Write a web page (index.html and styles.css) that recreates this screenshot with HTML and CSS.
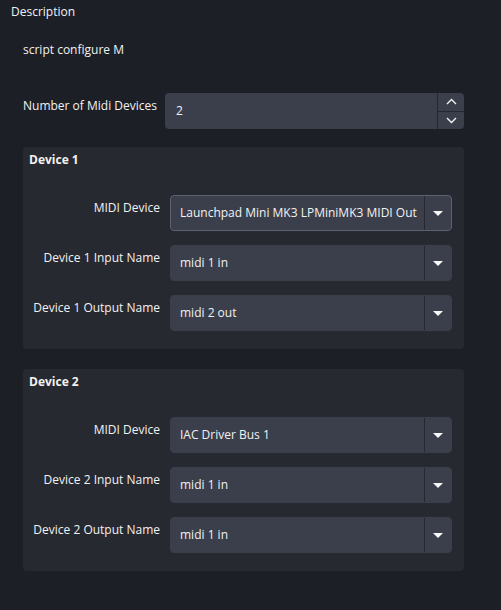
FILE: index.html
```html
<!DOCTYPE html>
<html>
<head>
<meta charset="utf-8">
<link rel="stylesheet" href="styles.css">
</head>
<body>
<div class="page">
  <div class="title">Description</div>
  <div class="content">
    <div class="desc">script configure M</div>
    <div class="toprow">
      <div class="label left">Number of Midi Devices</div>
      <div class="spin">
        <span class="value">2</span>
        <div class="spinbtns">
          <div class="sbtn"><svg width="11" height="7" viewBox="0 0 11 7"><path d="M1 6 L5.5 1.5 L10 6" fill="none" stroke="#f2f2f2" stroke-width="1.4"/></svg></div>
          <div class="sbtn"><svg width="11" height="7" viewBox="0 0 11 7"><path d="M1 1 L5.5 5.5 L10 1" fill="none" stroke="#f2f2f2" stroke-width="1.4"/></svg></div>
        </div>
      </div>
    </div>

    <div class="group g1">
      <div class="gtitle">Device 1</div>
      <div class="grid">
        <div class="label">MIDI Device</div>
        <div class="combo focus"><span class="value">Launchpad Mini MK3 LPMiniMK3 MIDI Out</span><span class="arrow"><i class="tri"></i></span></div>
        <div class="label">Device 1 Input Name</div>
        <div class="combo"><span class="value">midi 1 in</span><span class="arrow"><i class="tri"></i></span></div>
        <div class="label">Device 1 Output Name</div>
        <div class="combo"><span class="value">midi 2 out</span><span class="arrow"><i class="tri"></i></span></div>
      </div>
    </div>

    <div class="group g2">
      <div class="gtitle">Device 2</div>
      <div class="grid">
        <div class="label">MIDI Device</div>
        <div class="combo"><span class="value">IAC Driver Bus 1</span><span class="arrow"><i class="tri"></i></span></div>
        <div class="label">Device 2 Input Name</div>
        <div class="combo"><span class="value">midi 1 in</span><span class="arrow"><i class="tri"></i></span></div>
        <div class="label">Device 2 Output Name</div>
        <div class="combo"><span class="value">midi 1 in</span><span class="arrow"><i class="tri"></i></span></div>
      </div>
    </div>
  </div>
</div>
</body>
</html>
```

FILE: styles.css
```css
html, body {
  margin: 0;
  padding: 0;
  background: #1d1f26;
}
body {
  font-family: "Open Sans", "Noto Sans", sans-serif;
  font-size: 12px;
  line-height: 16px;
  color: #f2f2f2;
  width: 501px;
  height: 610px;
  overflow: hidden;
}
.page {
  padding: 4px 37px 0 11px;
}
.content {
  padding-left: 12px;
}
.desc {
  margin-top: 22px;
}
.toprow {
  margin-top: 35px;
  display: grid;
  grid-template-columns: 142px 1fr;
}
.label {
  padding-top: 5px;
  text-align: right;
}
.label.left {
  text-align: left;
}
.spin {
  height: 36px;
  background: #3b3e4b;
  border-radius: 4px;
  display: flex;
  align-items: center;
}
.spin .value {
  flex: 1;
  padding-left: 11px;
}
.spinbtns {
  width: 26px;
  height: 36px;
  border-left: 1px solid #262830;
  display: flex;
  flex-direction: column;
}
.sbtn {
  flex: 1;
  display: flex;
  align-items: center;
  justify-content: center;
}
.sbtn + .sbtn {
  border-top: 1px solid #262830;
}
.group {
  background: #272930;
  border-radius: 4px;
  padding: 5px 12px 18px 6px;
}
.g1 {
  margin-top: 18px;
}
.g2 {
  margin-top: 20px;
}
.gtitle {
  font-weight: bold;
}
.grid {
  margin-top: 27px;
  display: grid;
  grid-template-columns: 1fr 282px;
  column-gap: 10px;
  row-gap: 14px;
}
.combo {
  height: 36px;
  box-sizing: border-box;
  background: #3b3e4b;
  border-radius: 4px;
  border: 1px solid #3b3e4b;
  display: flex;
  align-items: center;
}
.combo.focus {
  border-color: #5d6170;
}
.combo .value {
  flex: 1;
  padding-left: 9px;
  white-space: nowrap;
  overflow: hidden;
}
.arrow {
  width: 26px;
  height: 34px;
  border-left: 1px solid #262830;
  display: flex;
  align-items: center;
  justify-content: center;
}
.tri {
  width: 0;
  height: 0;
  border-left: 5px solid transparent;
  border-right: 5px solid transparent;
  border-top: 5px solid #f8f8f8;
}
```
